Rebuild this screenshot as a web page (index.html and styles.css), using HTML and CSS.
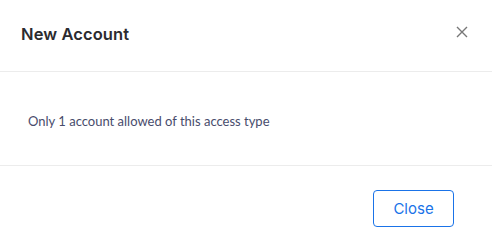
FILE: index.html
```html
<!DOCTYPE html>
<html lang="en">
<head>
    <meta charset="UTF-8">
    <meta name="viewport" content="width=device-width, initial-scale=1.0">
    <title>New Account</title>
    <link rel="stylesheet" href="styles.css">
</head>
<body>
    <div class="modal">
        <div class="modal-header">
            <h2 class="modal-title">New Account</h2>
            <button class="modal-close" aria-label="Close">
                <svg width="12" height="12" viewBox="0 0 12 12">
                    <path d="M1 1 L11 11 M11 1 L1 11" stroke="#777" stroke-width="1.4" fill="none"/>
                </svg>
            </button>
        </div>
        <div class="modal-body">
            <p>Only 1 account allowed of this access type</p>
        </div>
        <div class="modal-footer">
            <button class="btn-outline">Close</button>
        </div>
    </div>
</body>
</html>
```

FILE: styles.css
```css
body {
    margin: 0;
    background: #fff;
    font-family: Lato, sans-serif;
}

.modal {
    width: 492px;
    height: 248px;
    background: #fff;
}

.modal-header {
    display: flex;
    align-items: center;
    justify-content: space-between;
    padding: 0 24px 0 21px;
    border-bottom: 1px solid #ececec;
    box-sizing: border-box;
    height: 72px;
}

.modal-title {
    margin: 0;
    margin-top: -4px;
    font-family: Inter, sans-serif;
    font-size: 16.5px;
    font-weight: 600;
    letter-spacing: 0.1px;
    color: #2b2b2f;
}

.modal-close {
    border: none;
    background: none;
    padding: 0;
    width: 12px;
    height: 12px;
    cursor: pointer;
    margin-top: -8px;
}

.modal-close svg {
    display: block;
}

.modal-body {
    height: 94px;
    box-sizing: border-box;
    padding: 0 28px;
    display: flex;
    align-items: center;
    border-bottom: 1px solid #ececec;
}

.modal-body p {
    margin: 0;
    margin-top: 4px;
    font-size: 13px;
    color: #484c6c;
}

.modal-footer {
    display: flex;
    justify-content: flex-end;
    padding: 24px 38px 0 0;
}

.btn-outline {
    width: 81px;
    height: 37px;
    border: 1px solid #1a73e8;
    border-radius: 4px;
    background: #fff;
    color: #1a73e8;
    font-family: Inter, sans-serif;
    font-size: 15px;
    cursor: pointer;
}
```
